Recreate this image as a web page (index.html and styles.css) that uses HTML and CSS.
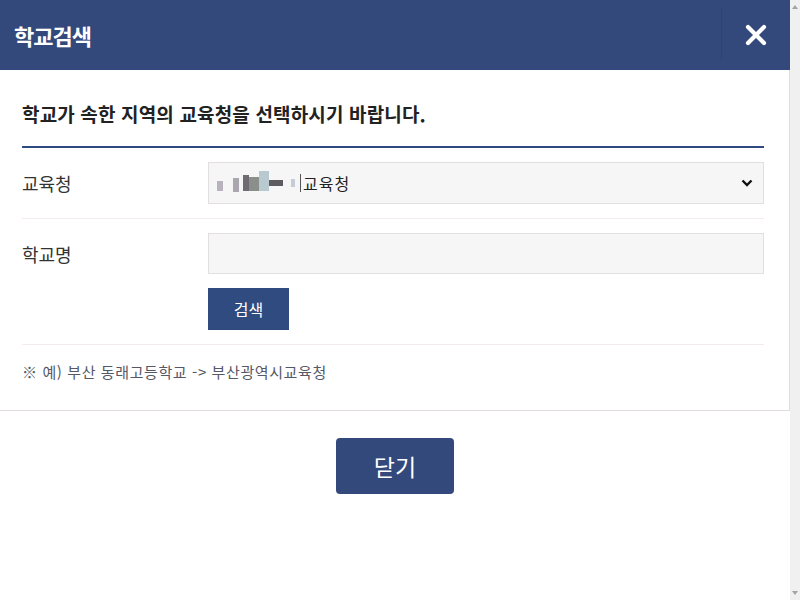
FILE: index.html
```html
<!DOCTYPE html>
<html lang="ko">
<head>
<meta charset="utf-8">
<title>학교검색</title>
<link rel="stylesheet" href="styles.css">
</head>
<body>
<div class="page">
  <div class="main">
    <header class="head">
      <h1 class="head-title">학교검색</h1>
      <button class="head-close" aria-label="닫기">
        <svg width="22" height="22" viewBox="0 0 22 22"><path d="M3 3 L19 19 M19 3 L3 19" stroke="#fff" stroke-width="4.2" stroke-linecap="round"/></svg>
      </button>
    </header>
    <section class="panel">
      <div class="intro">학교가 속한 지역의 교육청을 선택하시기 바랍니다.</div>
      <div class="row">
        <div class="label">교육청</div>
        <div class="fields">
          <div class="select">
            <span class="mosaic">
              <i class="m1"></i><i class="m2"></i><i class="m3"></i><i class="m4"></i><i class="m5"></i><i class="m6"></i><i class="m7"></i>
            </span>
            <span class="sel-text">교육청</span>
            <svg class="chev" width="12" height="8" viewBox="0 0 12 8"><path d="M1.5 1.5 L6 6 L10.5 1.5" fill="none" stroke="#111" stroke-width="2.4"/></svg>
          </div>
        </div>
      </div>
      <div class="row">
        <div class="label">학교명</div>
        <div class="fields">
          <div class="input"></div>
          <button class="btn-search">검색</button>
        </div>
      </div>
      <div class="note">※ 예) 부산 동래고등학교 -&gt; 부산광역시교육청</div>
    </section>
    <div class="foot">
      <button class="btn-close">닫기</button>
    </div>
  </div>
  <div class="scrollbar">
    <span class="arrow up"></span>
    <span class="arrow down"></span>
  </div>
</div>
</body>
</html>
```

FILE: styles.css
```css
html, body {
  margin: 0;
  padding: 0;
  height: 100%;
  overflow: hidden;
  background: #fff;
  font-family: "Noto Sans CJK KR", "Noto Sans", sans-serif;
}
.page {
  display: flex;
  height: 600px;
}
.main {
  width: 790px;
  display: flex;
  flex-direction: column;
}
.head {
  height: 70px;
  background: #34497b;
  display: flex;
  align-items: center;
  justify-content: space-between;
}
.head-title {
  margin: 0 0 0 14px;
  color: #fff;
  font-size: 22px;
  font-weight: 700;
  letter-spacing: -1px;
}
.head-close {
  width: 69px;
  height: 52px;
  border: 0;
  border-left: 1px solid #2f4270;
  background: transparent;
  display: flex;
  align-items: center;
  justify-content: center;
  padding: 0;
}
.panel {
  border-right: 1px solid #e2dcdd;
  border-bottom: 1px solid #e2dcdd;
  padding: 0 25px 0 22px;
}
.intro {
  height: 78px;
  border-bottom: 2px solid #2e4a80;
  box-sizing: border-box;
  padding-top: 31px;
  font-size: 19px;
  font-weight: 700;
  color: #222;
  letter-spacing: 0.15px;
  line-height: 26px;
}
.row {
  display: flex;
  padding: 14px 0;
  border-bottom: 1px solid #f3ebec;
}
.label {
  width: 186px;
  line-height: 42px;
  font-size: 18px;
  color: #333;
}
.fields {
  flex: 1;
  display: flex;
  flex-direction: column;
  align-items: flex-start;
  gap: 14px;
}
.select, .input {
  width: 100%;
  height: 42px;
  box-sizing: border-box;
  border: 1px solid #e3dfe0;
  background: #f6f6f6;
}
.select {
  display: flex;
  align-items: center;
  padding: 0 10px 0 8px;
  font-size: 16px;
  color: #222;
}
.mosaic {
  display: flex;
  align-items: center;
  height: 26px;
  margin-right: 2px;
}
.mosaic i { display: block; }
.m1 { width: 6px; height: 10px; background: #b8b3be; margin-right: 10px; margin-top: 6px; }
.m2 { width: 6px; height: 14px; background: #aaa8ae; margin-right: 4px; margin-top: 4px; }
.m3 { width: 6px; height: 16px; background: #6e6c72; }
.m4 { width: 10px; height: 14px; background: #8a8f8a; margin-top: 2px; }
.m5 { width: 10px; height: 20px; background: #b9c9d0; margin-top: -4px; }
.m6 { width: 14px; height: 6px; background: #5e5c60; margin-right: 8px; }
.m7 { width: 4px; height: 8px; background: #c5ced6; margin-right: 3px; }
.sel-text {
  border-left: 1px solid #555;
  padding-left: 2px;
  line-height: 18px;
  letter-spacing: 1px;
}
.chev { margin-left: auto; }
.input { height: 41px; }
.btn-search {
  width: 81px;
  height: 42px;
  border: 0;
  background: #2f4b80;
  color: #fff;
  font-family: inherit;
  font-size: 16px;
  padding: 0;
}
.note {
  height: 65px;
  line-height: 54px;
  font-size: 15px;
  color: #555866;
  letter-spacing: 0.6px;
}
.foot {
  display: flex;
  justify-content: center;
  padding-top: 27px;
}
.btn-close {
  width: 118px;
  height: 56px;
  border: 0;
  border-radius: 4px;
  background: #34497b;
  color: #fff;
  font-family: inherit;
  font-size: 23px;
  padding: 0;
}
.scrollbar {
  width: 10px;
  background: #f0f0f0;
  position: relative;
}
.arrow {
  position: absolute;
  left: 2px;
  width: 0;
  height: 0;
  border-left: 3px solid transparent;
  border-right: 3px solid transparent;
}
.arrow.up { top: 5px; border-bottom: 4px solid #a3a3a3; }
.arrow.down { bottom: 5px; border-top: 4px solid #a3a3a3; }
```
